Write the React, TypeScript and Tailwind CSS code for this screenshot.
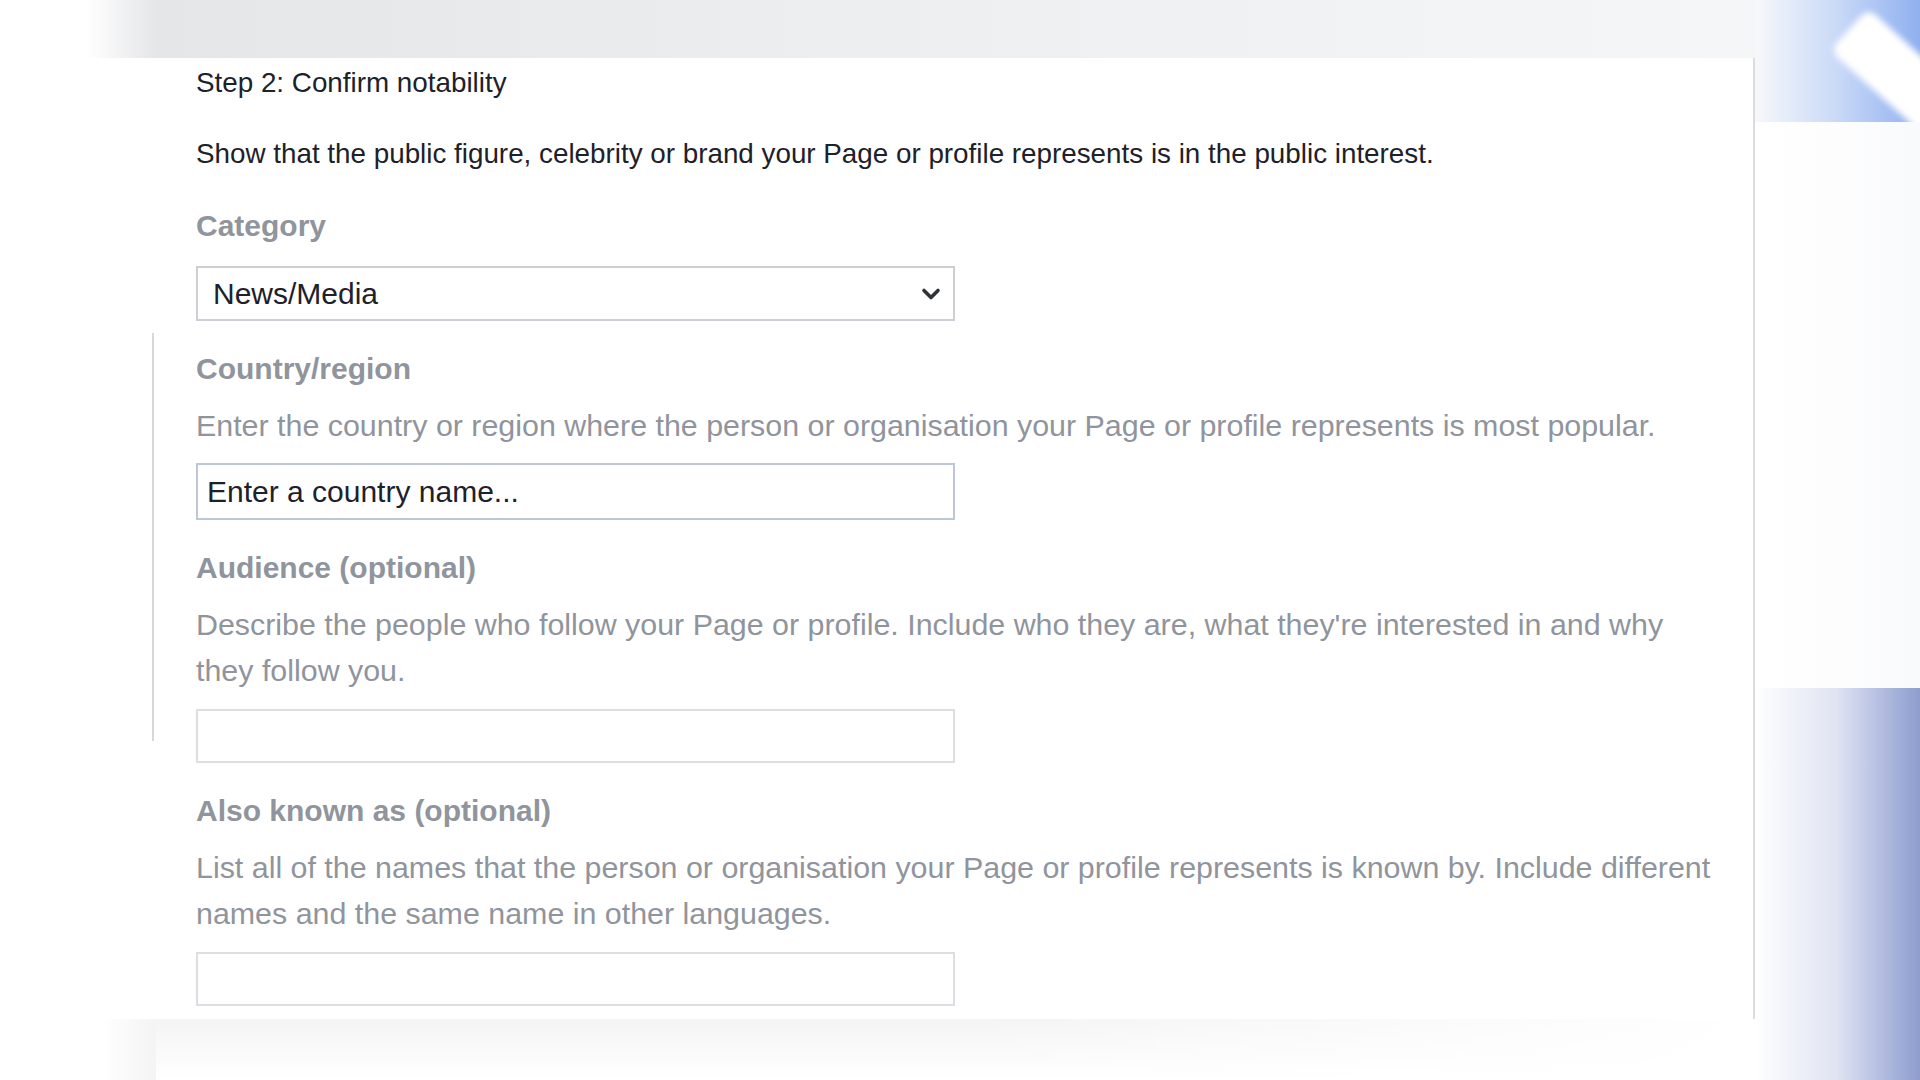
import { ReactNode } from "react";

const font = { fontFamily: '"Liberation Sans", Arial, sans-serif' };

function Label({ children }: { children: ReactNode }) {
  return <div className="h-[36px] text-[30px] leading-[36px] font-bold text-[#8f949d]">{children}</div>;
}

function Help({ children }: { children: ReactNode }) {
  return <p className="mt-[15px] max-w-[1522px] text-[30.4px] leading-[46px] text-[#8f949d]">{children}</p>;
}

function TextBox({ placeholder, tone = "plain" }: { placeholder?: string; tone?: "plain" | "focus" }) {
  return (
    <div
      className={
        tone === "focus"
          ? "mt-[15px] flex h-[57px] w-[759px] items-center border-2 border-[#bdc7d8] bg-white px-[9px]"
          : "mt-[16px] h-[54px] w-[759px] border-2 border-[#dcdee2] bg-white"
      }
    >
      {placeholder && <span className="text-[30px] text-[#1d2129]">{placeholder}</span>}
    </div>
  );
}

function Field({ label, help, children }: { label: string; help: string; children: ReactNode }) {
  return (
    <div className="mt-[30px]">
      <Label>{label}</Label>
      <Help>{help}</Help>
      {children}
    </div>
  );
}

export default function App() {
  return (
    <div className="flex h-[1080px] w-[1920px] overflow-hidden bg-white" style={font}>
      {/* left gutter */}
      <div className="flex w-[156px] shrink-0 flex-col">
        <div className="h-[58px] bg-gradient-to-r from-white from-55% to-[#e5e6e8]" />
        <div className="flex flex-1 pt-[275px]">
          <div className="ml-[152px] h-[408px] w-[2px] bg-[#d6d8dc]" />
        </div>
        <div className="h-[61px] bg-gradient-to-r from-white from-65% to-[#f4f4f5]" />
      </div>

      {/* main column */}
      <div className="flex w-[1599px] shrink-0 flex-col">
        <div className="h-[58px] bg-gradient-to-r from-[#e5e6e8] via-[#eeeff0] to-[#f5f6f7]" />
        <div className="h-[961px] border-r-2 border-[#dadce0] bg-white pl-[40px]">
          <div className="mt-[9px] h-[32px] text-[27.8px] leading-[32px] text-[#1d2129]">
            Step 2: Confirm notability
          </div>
          <p className="mt-[39px] h-[32px] text-[27.8px] leading-[32px] text-[#1d2129]">
            Show that the public figure, celebrity or brand your Page or profile represents is in the public interest.
          </p>

          <div className="mt-[38px]">
            <Label>Category</Label>
            <div className="mt-[22px] flex h-[55px] w-[759px] items-center justify-between border-2 border-[#ccd0d5] bg-white pl-[15px] pr-[12px]">
              <span className="text-[30px] text-[#1d2129]">News/Media</span>
              <svg width="20" height="14" viewBox="0 0 20 14" fill="none">
                <path d="M3 3.5l7 7 7-7" stroke="#2f3237" strokeWidth="3.6" strokeLinecap="round" strokeLinejoin="round" />
              </svg>
            </div>
          </div>

          <Field
            label="Country/region"
            help="Enter the country or region where the person or organisation your Page or profile represents is most popular."
          >
            <TextBox tone="focus" placeholder="Enter a country name..." />
          </Field>

          <Field
            label="Audience (optional)"
            help="Describe the people who follow your Page or profile. Include who they are, what they're interested in and why they follow you."
          >
            <TextBox />
          </Field>

          <Field
            label="Also known as (optional)"
            help="List all of the names that the person or organisation your Page or profile represents is known by. Include different names and the same name in other languages."
          >
            <TextBox />
          </Field>
        </div>
        <div className="flex-1 bg-gradient-to-b from-[#f4f4f5] to-white">
          <div className="h-full bg-gradient-to-r from-transparent via-transparent to-white" />
        </div>
      </div>

      {/* right decoration */}
      <div className="flex flex-1 flex-col">
        <div className="relative h-[122px] overflow-hidden bg-gradient-to-r from-[#f7f8fa] via-[#c9d9f7] to-[#8fb0ef]">
          <div className="absolute left-[94px] top-[1px] h-[57px] w-[220px] origin-left rotate-[42deg] rounded-[10px] bg-white blur-[3px]" />
        </div>
        <div className="h-[566px] bg-gradient-to-r from-white via-[#fdfdfe] to-[#f9fafc]" />
        <div className="flex-1 bg-gradient-to-r from-white via-[#dfe3f2] to-[#8e9dcf]" />
      </div>
    </div>
  );
}
